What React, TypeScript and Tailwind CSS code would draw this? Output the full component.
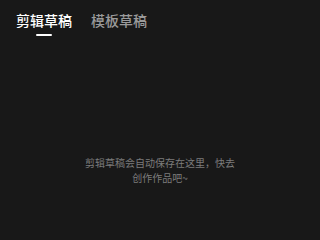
export default function App() {
  return (
    <div
      className="w-[320px] h-[240px] bg-[#181818] flex flex-col overflow-hidden"
      style={{ fontFamily: '"Noto Sans CJK SC", "Noto Sans", sans-serif' }}
    >
      {/* Tabs */}
      <div className="flex gap-[19px] px-4 pt-[10px]">
        <div className="flex flex-col items-center">
          <span className="text-[14px] leading-5 font-medium text-white">剪辑草稿</span>
          <span className="mt-[4px] w-4 h-[2px] rounded-full bg-white" />
        </div>
        <span className="text-[14px] leading-5 font-medium text-[#9a9a9a]">模板草稿</span>
      </div>

      {/* Empty state */}
      <div className="flex justify-center mt-[119px]">
        <p className="w-[158px] text-center text-[10px] leading-[15px] text-[#7c7c7c]">
          剪辑草稿会自动保存在这里，快去创作作品吧~
        </p>
      </div>
    </div>
  )
}
